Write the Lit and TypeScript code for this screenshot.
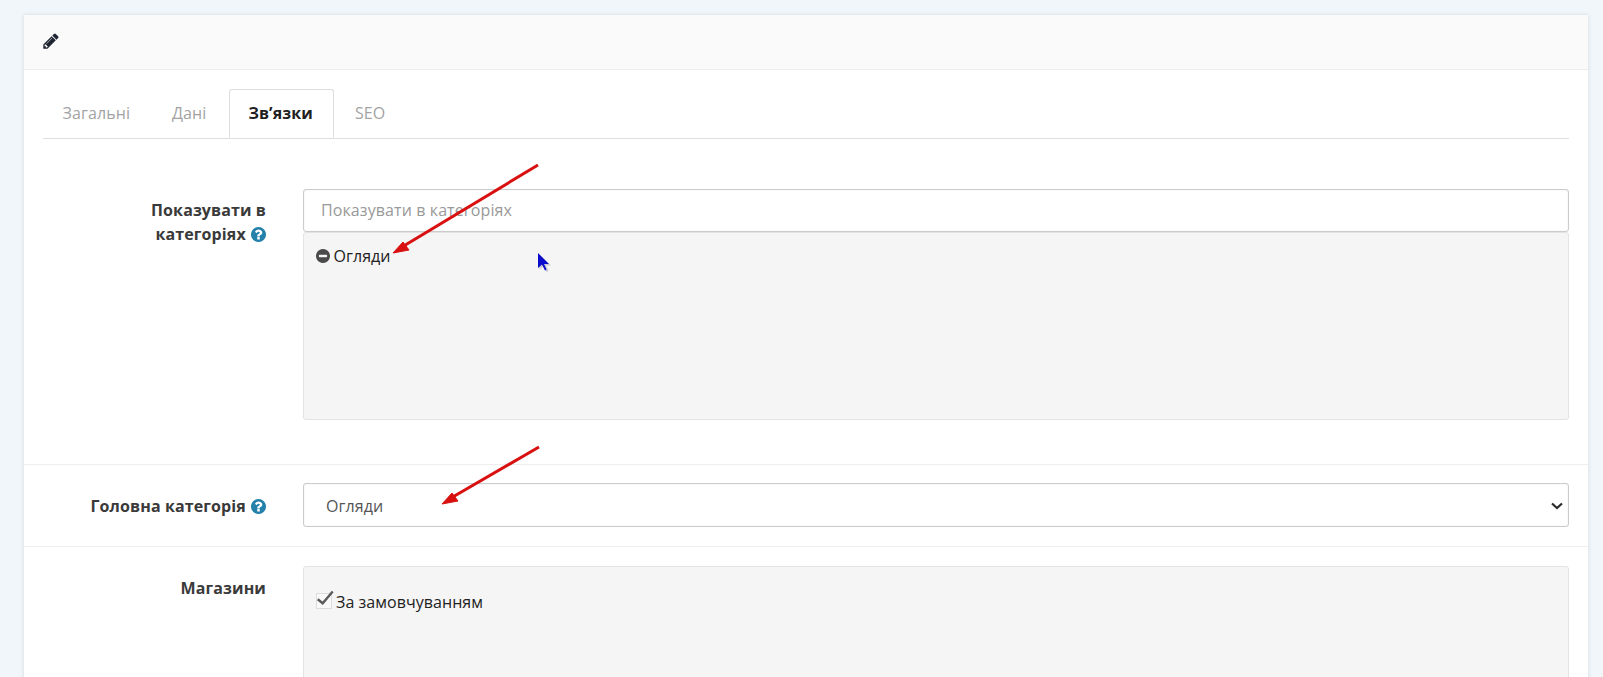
import { LitElement, html, css, svg } from "lit";
import { customElement } from "lit/decorators.js";

const pencil = "M491 1536l91-91-235-235-91 91v107h128v128h107zm523-928q0-22-22-22-10 0-17 7l-542 542q-7 7-7 17 0 22 22 22 10 0 17-7l542-542q7-7 7-17zm-54-192l416 416-832 832h-416v-416zm683 96q0 53-37 90l-166 166-416-416 166-165q36-38 90-38 53 0 91 38l235 234q37 39 37 91z";
const question = "M1024 1376v-192q0-14-9-23t-23-9h-192q-14 0-23 9t-9 23v192q0 14 9 23t23 9h192q14 0 23-9t9-23zm256-672q0-88-55.5-163t-138.5-116-170-41q-243 0-371 213-15 24 8 42l132 100q7 6 19 6 16 0 25-12 53-68 86-92 34-24 86-24 48 0 85.5 26t37.5 59q0 38-20 61t-68 45q-63 28-115.5 86.5t-52.5 125.5v36q0 14 9 23t23 9h192q14 0 23-9t9-23q0-19 21.5-49.5t54.5-49.5q32-18 49-28.5t46-35 44.5-48 28-60.5 12.5-81zm384 192q0 209-103 385.5t-279.5 279.5-385.5 103-385.5-103-279.5-279.5-103-385.5 103-385.5 279.5-279.5 385.5-103 385.5 103 279.5 279.5 103 385.5z";
const minus = "M1344 960v-128q0-26-19-45t-45-19h-768q-26 0-45 19t-19 45v128q0 26 19 45t45 19h768q26 0 45-19t19-45zm320-64q0 209-103 385.5t-279.5 279.5-385.5 103-385.5-103-279.5-279.5-103-385.5 103-385.5 279.5-279.5 385.5-103 385.5 103 279.5 279.5 103 385.5z";

const help = html`<svg class="help" viewBox="128 128 1536 1536"><path fill="#2580aa" d="${question}"></path></svg>`;

@customElement("app-root")
export class AppRoot extends LitElement {
  static styles = css`
    :host {
      display: block;
      position: relative;
      height: 677px;
      overflow: hidden;
      box-sizing: border-box;
      padding: 15px 15px 0 24px;
      background: #f1f6fa;
      font-family: "Open Sans", sans-serif;
      font-size: 16px;
      color: #333;
    }
    .card {
      background: #fff;
      box-shadow: 0 0 4px rgba(0, 0, 0, 0.13);
    }
    .head {
      height: 55px;
      box-sizing: border-box;
      background: #fafafa;
      border-bottom: 1px solid #eee;
      padding: 0 18px;
      display: flex;
      align-items: center;
    }
    .head svg { width: 18px; height: 18px; display: block; margin-top: -2px; }
    .body { padding: 19px 19px 0; }
    .tabs {
      display: flex;
      border-bottom: 1px solid #ddd;
      height: 49px;
      padding-left: 0;
    }
    .tab {
      padding: 0 20px;
      line-height: 47px;
      height: 49px;
      box-sizing: border-box;
      color: #a3a3a3;
      font-size: 16px;
      letter-spacing: 0.1px;
      border: 1px solid transparent;
    }
    .tab:first-child { margin-left: -1.500px; }
    .tab.active {
      color: #1f1f1f;
      font-weight: 700;
      background: #fff;
      border-color: #ddd #ddd #fff;
      border-radius: 3px 3px 0 0;
      margin-left: 2px;
      padding-left: 18px;
    }
    .row {
      display: grid;
      grid-template-columns: 223px 1fr;
      column-gap: 37px;
      margin: 0 -19px;
      padding: 0 19px;
    }
    .r1 { padding-top: 50px; padding-bottom: 44px; border-bottom: 1px solid #eee; }
    .r2 { padding-top: 18px; padding-bottom: 19px; border-bottom: 1px solid #eee; }
    .r3 { padding-top: 19px; }
    .label {
      text-align: right;
      font-weight: 700;
      font-size: 16px;
      letter-spacing: 0.1px;
      line-height: 24px;
      color: #3a3a3a;
    }
    .r1 .label { padding-top: 9px; padding-left: 20px; }
    .r2 .label { padding-top: 11px; }
    .r3 .label { padding-top: 10px; }
    .help { width: 15px; height: 15px; vertical-align: -2px; margin-left: 1px; }
    input, select {
      display: block;
      width: 100%;
      box-sizing: border-box;
      font-family: inherit;
      font-size: 16px;
      letter-spacing: 0.1px;
      color: #555;
      background: #fff;
      border: 1px solid #ccc;
      border-radius: 3px;
      box-shadow: inset 0 0 1px rgba(0, 0, 0, 0.2);
      outline: none;
    }
    input { height: 43px; padding: 0 17px 2px; }
    input::placeholder { color: #999; opacity: 1; }
    select {
      height: 44px;
      padding: 2px 17px 0 22px;
      appearance: none;
    }
    .select-wrap { position: relative; }
    .chevron {
      position: absolute;
      right: 6px;
      top: 19px;
      width: 12px;
      height: 8px;
      pointer-events: none;
    }
    .well {
      box-sizing: border-box;
      background: #f5f5f5;
      border: 1px solid #e3e3e3;
      border-radius: 3px;
      padding: 12px;
      color: #222;
      letter-spacing: 0.05px;
    }
    .w1 { height: 188px; }
    .w2 { height: 300px; padding-top: 24px; }
    .item { display: flex; align-items: center; line-height: 22px; }
    .item svg { width: 14px; height: 14px; margin-right: 3.500px; }
    .chk { display: flex; align-items: center; line-height: 22px; }
    .chk svg { width: 19px; height: 20px; margin-right: 1px; margin-top: -4px; }
    .overlay { position: absolute; left: 0; top: 0; pointer-events: none; }
  `;

  render() {
    return html`
      <div class="card">
        <div class="head">
          <svg viewBox="0 0 1792 1792"><path fill="#1f2533" d="${pencil}"></path></svg>
        </div>
        <div class="body">
          <div class="tabs">
            <div class="tab">Загальні</div>
            <div class="tab">Дані</div>
            <div class="tab active">Зв’язки</div>
            <div class="tab">SEO</div>
          </div>
          <div class="row r1">
            <div class="label">Показувати в категоріях ${help}</div>
            <div>
              <input type="text" placeholder="Показувати в категоріях" />
              <div class="well w1">
                <div class="item">
                  <svg viewBox="128 128 1536 1536"><path fill="#4a4a4a" d="${minus}"></path></svg>
                  Огляди
                </div>
              </div>
            </div>
          </div>
          <div class="row r2">
            <div class="label">Головна категорія ${help}</div>
            <div class="select-wrap">
              <select><option>Огляди</option></select>
              <svg class="chevron" viewBox="0 0 12 8">
                <path d="M1 1.500l5 4.500 5-4.500" fill="none" stroke="#2b2b2b" stroke-width="2.200"></path>
              </svg>
            </div>
          </div>
          <div class="row r3">
            <div class="label">Магазини</div>
            <div class="well w2">
              <div class="chk">
                <svg viewBox="0 0 19 20">
                  <rect x="0.5" y="3.5" width="15" height="15" fill="#f9f9f9" stroke="#dcdcdc"></rect>
                  <path d="M1.700 9.300l5 4L16.700 1.500" fill="none" stroke="#5a5a5a" stroke-width="2.400"></path>
                </svg>
                За замовчуванням
              </div>
            </div>
          </div>
        </div>
      </div>
      <svg class="overlay" width="1603" height="677" viewBox="0 0 1603 677">
        ${svg`
          <line x1="538" y1="165" x2="402" y2="247" stroke="#d81010" stroke-width="3"></line>
          <path d="M393 253l10-11 6 8z" fill="#d81010" stroke="#d81010"></path>
          <line x1="539" y1="447" x2="451" y2="498" stroke="#d81010" stroke-width="3"></line>
          <path d="M442 504l10-11 6 8z" fill="#d81010" stroke="#d81010"></path>
          <path d="M539.500 254.500v15l4-3.500 3 6 2-1-2.500-5.500 5 0z" fill="#c8c8d0"></path>
          <path d="M538 253v15l4-3.500 3 6 1.500-1-2.500-5.500 5 0z" fill="#0a0acc"></path>
        `}
      </svg>
    `;
  }
}
